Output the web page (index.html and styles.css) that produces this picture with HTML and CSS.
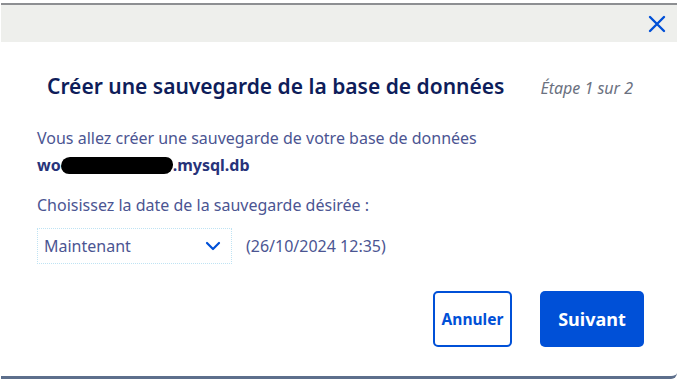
FILE: index.html
```html
<!DOCTYPE html>
<html lang="fr">
<head>
    <meta charset="UTF-8">
    <title>Créer une sauvegarde</title>
    <link rel="stylesheet" href="styles.css">
</head>
<body>
    <div class="modal">
        <div class="modal-header">
            <button class="close-btn" aria-label="Fermer">
                <svg width="18" height="18" viewBox="0 0 18 18">
                    <path d="M2 2 L16 16 M16 2 L2 16" stroke="#0050d7" stroke-width="2.4" stroke-linecap="round"/>
                </svg>
            </button>
        </div>
        <div class="modal-body">
            <div class="title-row">
                <h2 class="title">Créer une sauvegarde de la base de données</h2>
                <span class="step">Étape 1 sur 2</span>
            </div>
            <p class="text">Vous allez créer une sauvegarde de votre base de données</p>
            <p class="db-name">wo<span class="redacted"></span>.mysql.db</p>
            <p class="text label">Choisissez la date de la sauvegarde désirée :</p>
            <div class="select-row">
                <div class="select">
                    <span>Maintenant</span>
                    <svg width="16" height="10" viewBox="0 0 16 10">
                        <path d="M2 2 L8 8 L14 2" fill="none" stroke="#0050d7" stroke-width="2.2" stroke-linecap="round" stroke-linejoin="round"/>
                    </svg>
                </div>
                <span class="date">(26/10/2024 12:35)</span>
            </div>
            <div class="actions">
                <button class="btn btn-outline">Annuler</button>
                <button class="btn btn-primary">Suivant</button>
            </div>
        </div>
    </div>
</body>
</html>
```

FILE: styles.css
```css
body {
    margin: 0;
    background: #ffffff;
    font-family: "Noto Sans", "Open Sans", sans-serif;
}
.modal {
    width: 676px;
    height: 376px;
    margin-top: 3px;
    margin-left: 1px;
    border-top: 2px solid #8d8f92;
    border-bottom: 3px solid #5d6f8c;
    border-bottom-right-radius: 6px;
    box-sizing: border-box;
    background: #ffffff;
}
.modal-header {
    height: 37px;
    background: #eeefec;
    display: flex;
    justify-content: flex-end;
    align-items: center;
    padding-right: 11px;
}
.close-btn {
    background: none;
    border: none;
    padding: 0;
    width: 18px;
    height: 18px;
    cursor: pointer;
}
.modal-body {
    padding: 30px 0 0 36px;
}
.title-row {
    display: flex;
    align-items: baseline;
    padding-left: 10px;
}
.title {
    margin: 0;
    font-size: 21px;
    font-weight: 600;
    color: #0e1d5a;
}
.step {
    margin-left: 36px;
    font-size: 16px;
    font-style: italic;
    color: #6b7180;
}
.text {
    margin: 27px 0 0;
    font-size: 16px;
    color: #4b5592;
}
.db-name {
    margin: 5px 0 0;
    font-size: 16px;
    font-weight: 700;
    color: #27337a;
}
.redacted {
    display: inline-block;
    background: #000000;
    border-radius: 10px 8px 10px 9px;
    width: 112px;
    height: 17px;
    vertical-align: -3px;
}
.label {
    margin-top: 18px;
}
.select-row {
    display: flex;
    align-items: center;
    margin-top: 12px;
}
.select {
    width: 195px;
    height: 36px;
    box-sizing: border-box;
    border: 1px dotted #bfe3f3;
    display: flex;
    align-items: center;
    justify-content: space-between;
    padding: 0 10px 0 6px;
    font-size: 16px;
    color: #4b5592;
}
.date {
    margin-left: 14px;
    font-size: 16px;
    color: #4b5592;
}
.actions {
    display: flex;
    justify-content: flex-end;
    gap: 28px;
    margin-top: 27px;
    padding-right: 33px;
}
.btn {
    height: 56px;
    border-radius: 5px;
    font-family: "Noto Sans", "Open Sans", sans-serif;
    font-weight: 700;
    padding: 0;
    cursor: pointer;
}
.btn-outline {
    width: 79px;
    background: #ffffff;
    border: 2px solid #0050d7;
    color: #0050d7;
    font-size: 15.5px;
}
.btn-primary {
    width: 104px;
    background: #0050d7;
    border: none;
    color: #ffffff;
    font-size: 18px;
}
```
